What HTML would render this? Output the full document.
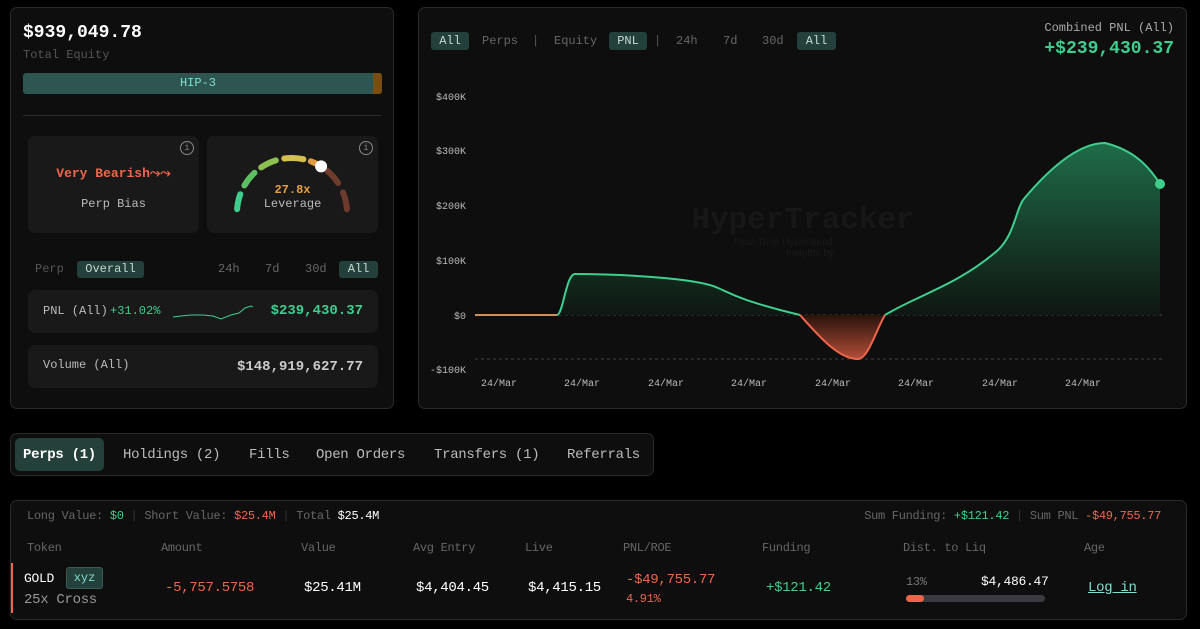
<!DOCTYPE html>
<html><head><meta charset="utf-8"><style>
*{box-sizing:border-box;margin:0;padding:0}
body{width:1200px;height:629px;background:#000;font-family:"Liberation Mono",monospace;color:#ddd;position:relative;overflow:hidden}
.a{position:absolute;white-space:nowrap}
.panel{position:absolute;background:#0e0e0e;border:1px solid #2a2a2a;border-radius:7px}
.card{position:absolute;background:#191919;border-radius:7px}
.g{color:#3ecf8e}.r{color:#f0654a}.m{color:#8a8a8a}
.pill{position:absolute;background:#23403a;border-radius:3px;color:#c8d8d4}
.tb{letter-spacing:-0.3px}
</style></head><body>

<div class="panel" style="left:10px;top:7px;width:384px;height:402px">
  <div class="a" style="left:12px;top:15px;font-size:18px;font-weight:bold;color:#fff">$939,049.78</div>
  <div class="a" style="left:12px;top:40px;font-size:12px;color:#555">Total Equity</div>
  <div class="a" style="left:12px;top:65px;width:359px;height:21px;background:#2f5550;border-radius:3px;overflow:hidden">
    <div class="a" style="right:0;top:0;width:9px;height:21px;background:#7a4e10"></div>
    <div class="a" style="left:0;width:350px;top:3px;text-align:center;font-size:12px;color:#7fe0d0">HIP-3</div>
  </div>
  <div class="a" style="left:12px;top:107px;width:359px;height:1px;background:#2a2a2a"></div>

  <div class="card" style="left:17px;top:128px;width:171px;height:97px">
    <div class="a" style="right:5px;top:5px;width:14px;height:14px;border:1px solid #888;border-radius:50%;font-size:9px;color:#888;text-align:center;line-height:12px">i</div>
    <div class="a r" style="left:0;width:171px;top:30px;text-align:center;font-size:13px;font-weight:bold">Very Bearish⤳⤳</div>
    <div class="a" style="left:0;width:171px;top:61px;text-align:center;font-size:12px;color:#bbb">Perp Bias</div>
  </div>
  <div class="card" style="left:196px;top:128px;width:171px;height:97px">
    <div class="a" style="right:5px;top:5px;width:14px;height:14px;border:1px solid #888;border-radius:50%;font-size:9px;color:#888;text-align:center;line-height:12px">i</div>
    <svg class="a" style="left:0;top:0" width="171" height="97" viewBox="0 0 171 97">
      <g transform="translate(85,77)" fill="none" stroke-width="6" stroke-linecap="round">
        <path d="M-54.9,-3.8 A55,55 0 0 1 -51.7,-18.8" stroke="#3ecf8e"/>
        <path d="M-47.6,-27.5 A55,55 0 0 1 -37.5,-40.2" stroke="#5cc060"/>
        <path d="M-30.8,-45.6 A55,55 0 0 1 -16.1,-52.6" stroke="#8cc050"/>
        <path d="M-7.7,-54.5 A55,55 0 0 1 11.4,-53.8" stroke="#d4c050"/>
        <path d="M18.8,-51.7 A55,55 0 0 1 27.5,-47.6" stroke="#e09a40"/>
        <path d="M35.4,-42.1 A55,55 0 0 1 46.1,-30.0" stroke="#6e3c2c"/>
        <path d="M51.0,-20.6 A55,55 0 0 1 54.9,-3.8" stroke="#6e3a2e"/>
        <circle cx="29.1" cy="-46.6" r="6" fill="#fff" stroke="none"/>
      </g>
    </svg>
    <div class="a" style="left:0;width:171px;top:47px;text-align:center;font-size:12px;font-weight:bold;color:#e8a040">27.8x</div>
    <div class="a" style="left:0;width:171px;top:61px;text-align:center;font-size:12px;color:#bbb">Leverage</div>
  </div>

  <div class="a" style="left:24px;top:254px;font-size:12px;color:#555">Perp</div>
  <div class="pill" style="left:66px;top:253px;width:67px;height:17px;font-size:12px;text-align:center;line-height:17px">Overall</div>
  <div class="a" style="left:207px;top:254px;font-size:12px;color:#666">24h</div>
  <div class="a" style="left:254px;top:254px;font-size:12px;color:#666">7d</div>
  <div class="a" style="left:294px;top:254px;font-size:12px;color:#666">30d</div>
  <div class="pill" style="left:328px;top:253px;width:39px;height:17px;font-size:12px;text-align:center;line-height:17px">All</div>

  <div class="card" style="left:17px;top:282px;width:350px;height:43px">
    <div class="a" style="left:15px;top:14px;font-size:12px;color:#bbb">PNL (All)</div>
    <div class="a g" style="left:82px;top:14px;font-size:12px">+31.02%</div>
    <svg class="a" style="left:145px;top:12px" width="80" height="20"><polyline points="0,15 8,14 18,13 30,13 40,14 48,17 58,13 66,11 72,6 78,4 82,6" fill="none" stroke="#3ecf8e" stroke-width="1"/></svg>
    <div class="a g" style="right:15px;top:13px;font-size:14px;font-weight:bold">$239,430.37</div>
  </div>
  <div class="card" style="left:17px;top:337px;width:350px;height:43px">
    <div class="a" style="left:15px;top:13px;font-size:12px;color:#bbb">Volume (All)</div>
    <div class="a" style="right:15px;top:14px;font-size:14px;font-weight:bold;color:#ccc">$148,919,627.77</div>
  </div>
</div>

<div class="panel" style="left:418px;top:7px;width:769px;height:402px"></div>
<div class="pill" style="left:431px;top:32px;width:38px;height:18px;font-size:12px;text-align:center;line-height:18px">All</div>
<div class="a" style="left:482px;top:34px;font-size:12px;color:#666">Perps</div>
<div class="a" style="left:532px;top:34px;font-size:12px;color:#555">|</div>
<div class="a" style="left:554px;top:34px;font-size:12px;color:#666">Equity</div>
<div class="pill" style="left:609px;top:32px;width:38px;height:18px;font-size:12px;text-align:center;line-height:18px">PNL</div>
<div class="a" style="left:654px;top:34px;font-size:12px;color:#555">|</div>
<div class="a" style="left:676px;top:34px;font-size:12px;color:#666">24h</div>
<div class="a" style="left:723px;top:34px;font-size:12px;color:#666">7d</div>
<div class="a" style="left:762px;top:34px;font-size:12px;color:#666">30d</div>
<div class="pill" style="left:797px;top:32px;width:39px;height:18px;font-size:12px;text-align:center;line-height:18px">All</div>
<div class="a" style="right:26px;top:21px;font-size:12px;color:#aaa">Combined PNL (All)</div>
<div class="a g" style="right:26px;top:39px;font-size:18px;font-weight:bold">+$239,430.37</div>

<svg class="a" style="left:418px;top:0" width="770" height="410">
  <defs>
    <linearGradient id="gg" gradientUnits="userSpaceOnUse" x1="0" y1="140" x2="0" y2="315">
      <stop offset="0" stop-color="#1f6e4a"/><stop offset="0.6" stop-color="#153826"/><stop offset="1" stop-color="#0f1712"/>
    </linearGradient>
    <linearGradient id="rg" gradientUnits="userSpaceOnUse" x1="0" y1="315" x2="0" y2="360">
      <stop offset="0" stop-color="#2a120c"/><stop offset="1" stop-color="#b5503a"/>
    </linearGradient>
  </defs>
  <g font-family="Liberation Mono,monospace" font-size="10" fill="#bbb" text-anchor="end">
    <text x="48" y="100">$400K</text><text x="48" y="154">$300K</text><text x="48" y="209">$200K</text>
    <text x="48" y="264">$100K</text><text x="48" y="319">$0</text><text x="48" y="373">-$100K</text>
  </g>
  <g font-family="Liberation Mono,monospace" font-size="10" fill="#bbb">
    <text x="63" y="386">24/Mar</text><text x="146" y="386">24/Mar</text><text x="230" y="386">24/Mar</text><text x="313" y="386">24/Mar</text>
    <text x="397" y="386">24/Mar</text><text x="480" y="386">24/Mar</text><text x="564" y="386">24/Mar</text><text x="647" y="386">24/Mar</text>
  </g>
  <line x1="57" y1="315" x2="745" y2="315" stroke="#444" stroke-dasharray="3,3"/>
  <line x1="57" y1="359" x2="745" y2="359" stroke="#444" stroke-dasharray="3,3"/>
  <path d="M139,315 C145,315 148,274 157,274 C200,274 280,278 300,288 C310,295 318,304 382,315 Z" fill="url(#gg)"/>
  <path d="M467,315 C500,295 540,285 580,250 C596,235 598,210 605,200 C630,170 660,143 687,143 C715,150 730,165 742,184 L742,315 Z" fill="url(#gg)"/>
  <path d="M382,315 C400,335 420,359 440,359 C450,359 458,330 467,315 Z" fill="url(#rg)"/>
  <text x="385" y="228" text-anchor="middle" font-family="Liberation Mono,monospace" font-weight="bold" font-size="31" fill="#1a1a1a" fill-opacity="0.8">HyperTracker</text>
  <text x="365" y="245" text-anchor="middle" font-family="Liberation Sans,sans-serif" font-size="10" fill="#1a1a1a">Real-Time Hyperliquid</text>
  <text x="392" y="256" text-anchor="middle" font-family="Liberation Sans,sans-serif" font-size="10" fill="#1a1a1a">Insights by</text>
  <path d="M57,315 L139,315" stroke="#d0905a" stroke-width="2" fill="none"/>
  <path d="M139,315 C145,315 148,274 157,274 C200,274 280,278 300,288 C312,293 320,300 382,315" stroke="#3ecf8e" stroke-width="2" fill="none"/>
  <path d="M382,315 C400,335 420,359 440,359 C450,359 458,330 467,315" stroke="#f0654a" stroke-width="2" fill="none"/>
  <path d="M467,315 C500,295 540,285 580,250 C596,235 598,210 605,200 C630,170 660,143 687,143 C715,150 730,165 742,184" stroke="#3ecf8e" stroke-width="2" fill="none"/>
  <circle cx="742" cy="184" r="5" fill="#3ecf8e"/>
</svg>

<div class="panel" style="left:10px;top:433px;width:644px;height:43px"></div>
<div class="a" style="left:15px;top:438px;width:89px;height:33px;background:#23403a;border-radius:5px"></div>
<div class="a tb" style="left:23px;top:447px;font-size:14px;font-weight:bold;color:#fff">Perps (1)</div>
<div class="a tb" style="left:123px;top:447px;font-size:14px;color:#bbb">Holdings (2)</div>
<div class="a tb" style="left:249px;top:447px;font-size:14px;color:#bbb">Fills</div>
<div class="a tb" style="left:316px;top:447px;font-size:14px;color:#bbb">Open Orders</div>
<div class="a tb" style="left:434px;top:447px;font-size:14px;color:#bbb">Transfers (1)</div>
<div class="a tb" style="left:567px;top:447px;font-size:14px;color:#bbb">Referrals</div>

<div class="panel" style="left:10px;top:500px;width:1177px;height:120px"></div>
<div class="a tb" style="left:27px;top:509px;font-size:12px;white-space:pre"><span style="color:#666">Long Value: </span><span class="g">$0</span><span style="color:#333"> | </span><span style="color:#666">Short Value: </span><span class="r">$25.4M</span><span style="color:#333"> | </span><span style="color:#666">Total </span><span style="color:#fff">$25.4M</span></div>
<div class="a tb" style="right:39px;top:509px;font-size:12px;white-space:pre"><span style="color:#666">Sum Funding: </span><span class="g">+$121.42</span><span style="color:#333"> | </span><span style="color:#666">Sum PNL </span><span class="r">-$49,755.77</span></div>
<div class="a tb" style="left:0;top:541px;font-size:12px;color:#666">
  <span class="a" style="left:27px">Token</span><span class="a" style="left:161px">Amount</span><span class="a" style="left:301px">Value</span><span class="a" style="left:413px">Avg Entry</span><span class="a" style="left:525px">Live</span><span class="a" style="left:623px">PNL/ROE</span><span class="a" style="left:762px">Funding</span><span class="a" style="left:903px">Dist. to Liq</span><span class="a" style="left:1084px">Age</span>
</div>
<div class="a" style="left:11px;top:563px;width:2px;height:50px;background:#f0654a"></div>
<div class="a tb" style="left:24px;top:571px;font-size:13px;color:#fff">GOLD</div>
<div class="a" style="left:66px;top:567px;width:37px;height:22px;background:#23403a;border:1px solid #3a5a54;border-radius:3px;font-size:12px;color:#7fe0d0;text-align:center;line-height:20px">xyz</div>
<div class="a tb" style="left:24px;top:592px;font-size:14px;color:#999">25x Cross</div>
<div class="a r tb" style="left:165px;top:580px;font-size:14px">-5,757.5758</div>
<div class="a tb" style="left:304px;top:580px;font-size:14px;color:#fff">$25.41M</div>
<div class="a tb" style="left:416px;top:580px;font-size:14px;color:#fff">$4,404.45</div>
<div class="a tb" style="left:528px;top:580px;font-size:14px;color:#fff">$4,415.15</div>
<div class="a r tb" style="left:626px;top:572px;font-size:14px">-$49,755.77</div>
<div class="a r tb" style="left:626px;top:592px;font-size:12px">4.91%</div>
<div class="a g tb" style="left:766px;top:580px;font-size:14px">+$121.42</div>
<div class="a tb" style="left:906px;top:575px;font-size:12px;color:#777">13%</div>
<div class="a tb" style="left:981px;top:574px;font-size:13px;color:#fff">$4,486.47</div>
<div class="a" style="left:906px;top:595px;width:139px;height:7px;background:#3a3a40;border-radius:4px"><div style="width:18px;height:7px;background:#f0654a;border-radius:4px"></div></div>
<div class="a tb" style="left:1088px;top:580px;font-size:14px;color:#7fe0d0;text-decoration:underline">Log in</div>

</body></html>
